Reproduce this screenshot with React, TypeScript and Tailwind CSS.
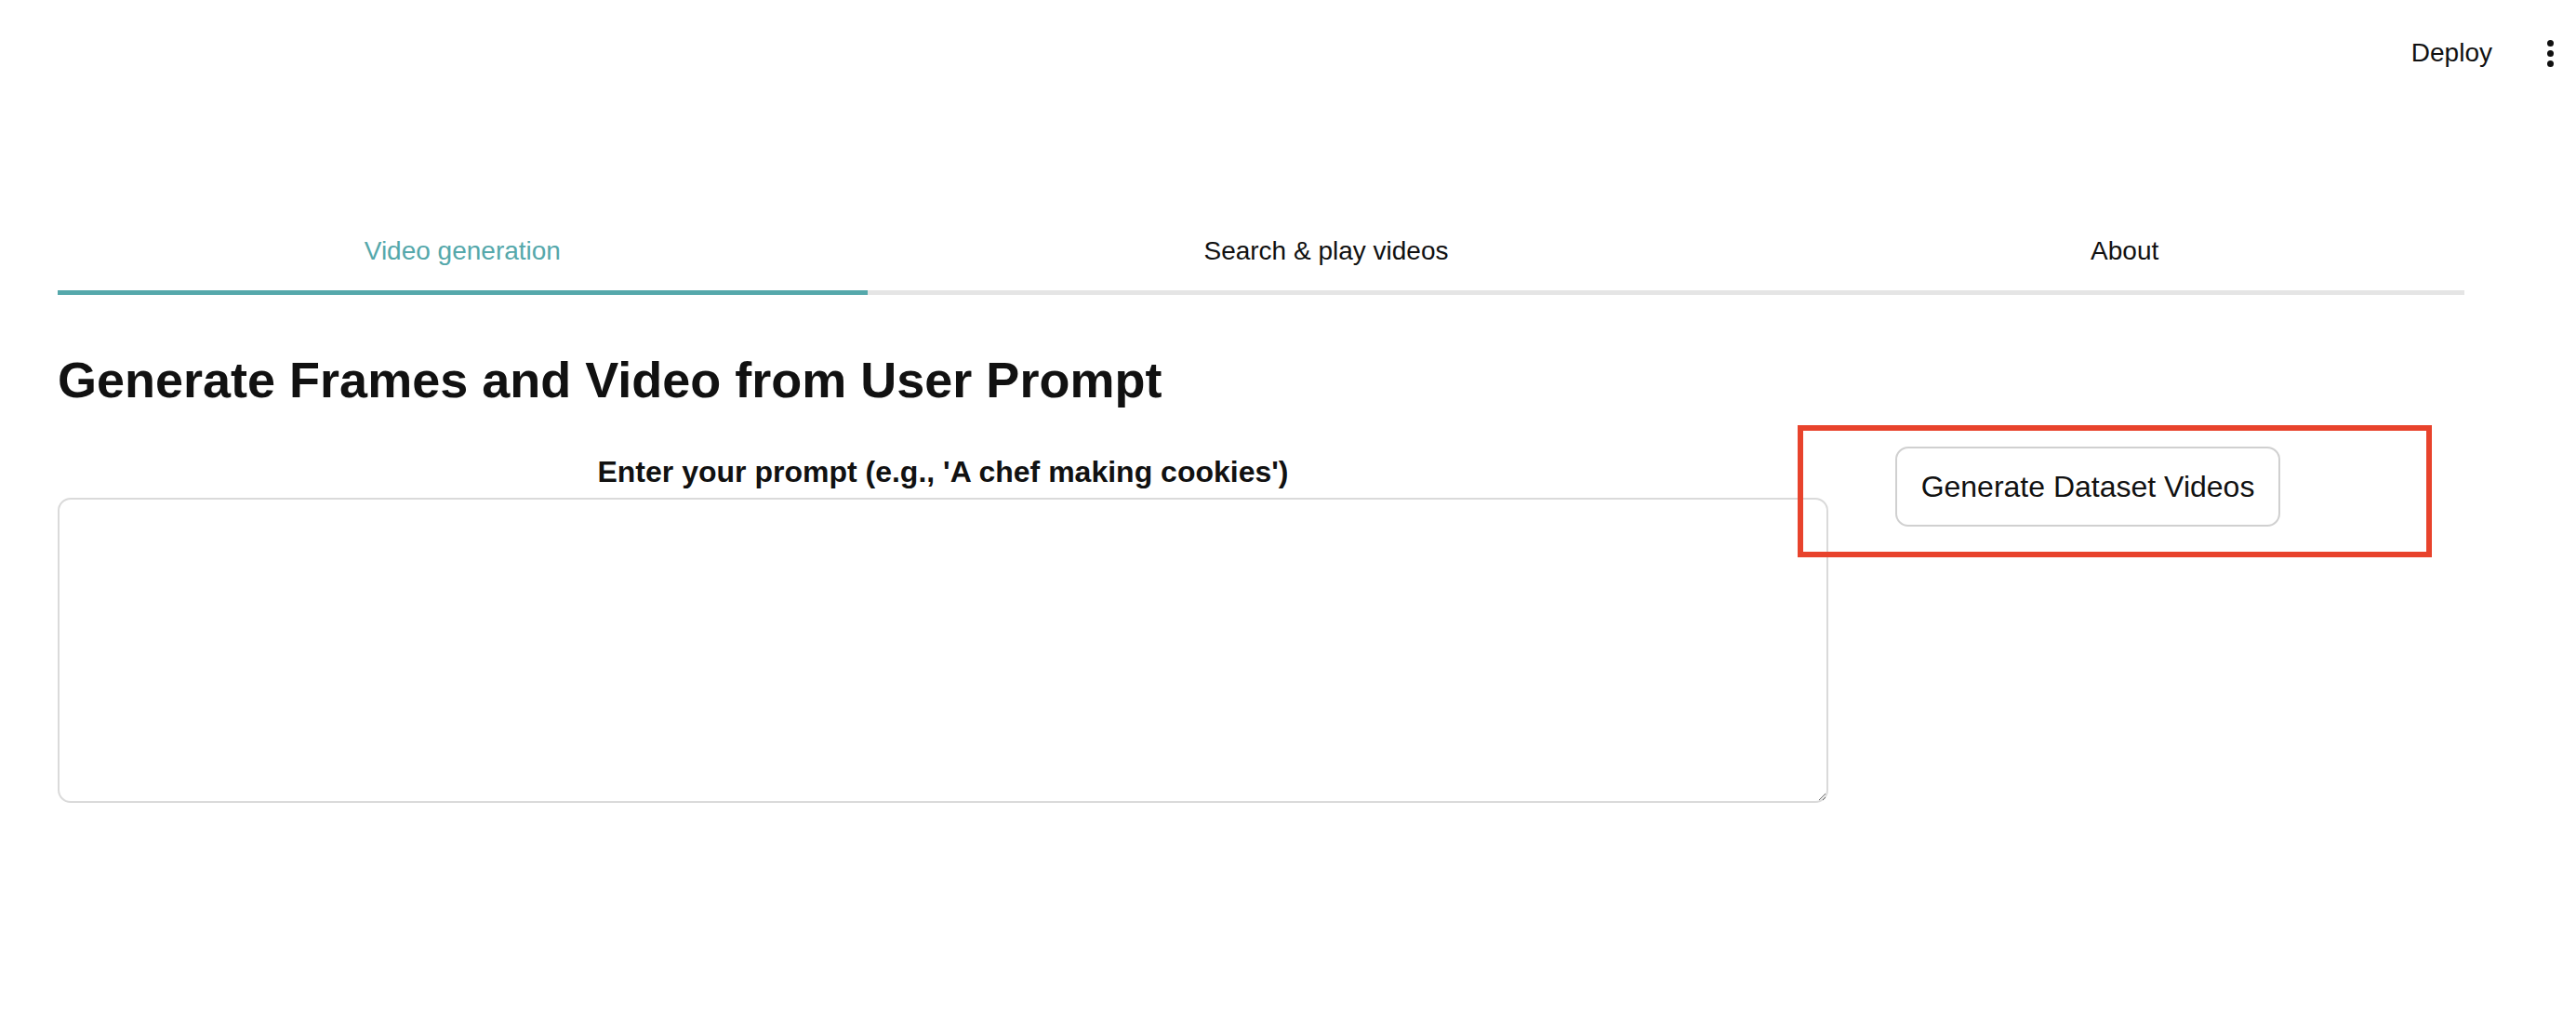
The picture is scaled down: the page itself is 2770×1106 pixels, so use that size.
import React from 'react'

const tabs = [
  { label: 'Video generation', width: 'w-[871px]', active: true },
  { label: 'Search & play videos', width: 'w-[919px]', active: false },
  { label: 'About', width: 'w-[731px]', active: false },
]

const App = () => {
  return (
    <div className="min-h-[1106px] w-[2770px] bg-white text-[#111111] font-['Liberation_Sans',Arial,sans-serif]">
      {/* top bar */}
      <header className="h-[114px] flex items-center justify-end pr-[24px]">
        <span className="text-[28px] leading-none">Deploy</span>
        <button className="ml-[59px] flex flex-col gap-[4px] items-center">
          <span className="block w-[7px] h-[7px] rounded-full bg-[#111111]" />
          <span className="block w-[7px] h-[7px] rounded-full bg-[#111111]" />
          <span className="block w-[7px] h-[7px] rounded-full bg-[#111111]" />
        </button>
      </header>

      <main className="pl-[62px] w-[2650px]">
        {/* tabs */}
        <div className="mt-[113px] flex gap-[34px] border-b-[5px] border-[#e5e5e5]">
          {tabs.map((t) => (
            <div
              key={t.label}
              className={`${t.width} h-[90px] -mb-[5px] border-b-[5px] flex items-center justify-center text-[28px] leading-none ${
                t.active ? 'border-[#55a8ab] text-[#55a8ab]' : 'border-transparent text-[#111111]'
              }`}
            >
              {t.label}
            </div>
          ))}
        </div>

        <h1 className="mt-[64px] text-[54px] leading-[54px] font-bold">
          Generate Frames and Video from User Prompt
        </h1>

        <div className="mt-[45px] flex items-start">
          <div className="w-[1904px] flex flex-col">
            <label className="mt-[11px] text-[32px] leading-[32px] font-bold text-center">
              Enter your prompt (e.g., 'A chef making cookies')
            </label>
            <textarea className="mt-[12px] h-[328px] w-full rounded-[14px] border-2 border-[#dadada] outline-none p-4" />
          </div>

          <div className="relative ml-[72px]">
            <button className="w-[414px] h-[86px] rounded-[14px] border-2 border-[#d0d0d0] bg-white text-[32px] leading-none">
              Generate Dataset Videos
            </button>
            {/* highlight annotation */}
            <div className="absolute left-[-105px] top-[-23px] w-[682px] h-[142px] border-[6px] border-[#e8432c] pointer-events-none" />
          </div>
        </div>
      </main>
    </div>
  )
}

export default App
